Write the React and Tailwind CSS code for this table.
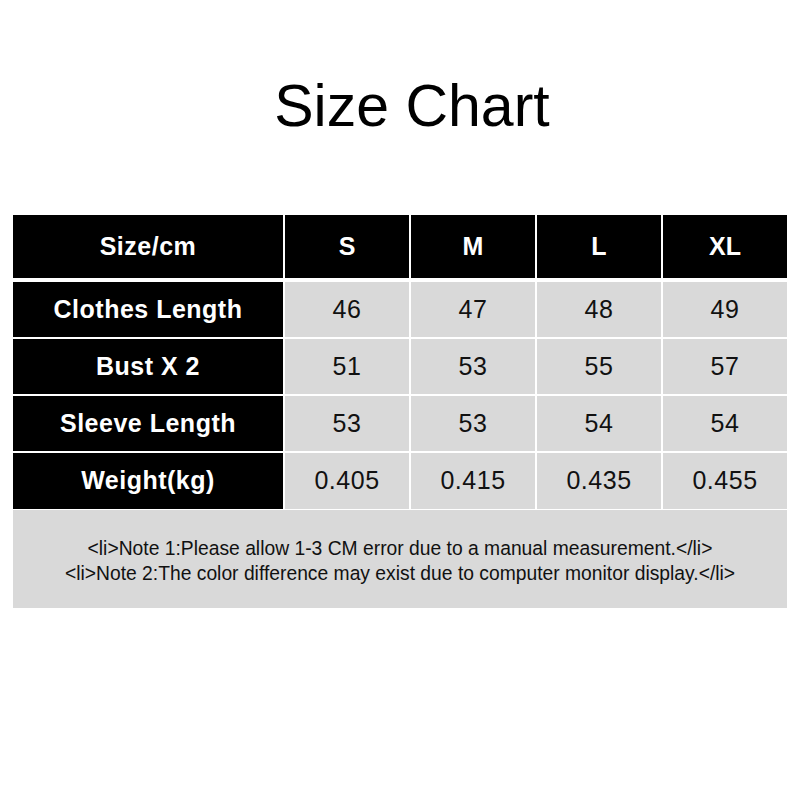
import React from "react";

const sizes = ["S", "M", "L", "XL"];

const rows = [
  { label: "Clothes Length", values: ["46", "47", "48", "49"] },
  { label: "Bust X 2", values: ["51", "53", "55", "57"] },
  { label: "Sleeve Length", values: ["53", "53", "54", "54"] },
  { label: "Weight(kg)", values: ["0.405", "0.415", "0.435", "0.455"], tall: true },
];

const font = { fontFamily: '"Liberation Sans", Arial, sans-serif' };

const App = () => {
  return (
    <div className="w-[800px] h-[800px] bg-white" style={font}>
      {/* Title */}
      <h1 className="pt-[77px] pl-[24px] text-center text-[59px] leading-none font-normal text-black">
        Size Chart
      </h1>

      {/* Table */}
      <div className="mt-[79px] ml-[13px] w-[774px] flex flex-col">
        {/* Header */}
        <div className="grid grid-cols-[270px_repeat(4,124px)] gap-x-[2px] h-[63px]">
          <div className="bg-black text-white font-bold text-[25px] tracking-[0.5px] flex items-center justify-center">
            Size/cm
          </div>
          {sizes.map((s) => (
            <div
              key={s}
              className="bg-black text-white font-bold text-[25px] flex items-center justify-center"
            >
              {s}
            </div>
          ))}
        </div>

        {/* Body */}
        <div className="mt-[4px] flex flex-col gap-y-[2px]">
          {rows.map((r) => (
            <div
              key={r.label}
              className={`grid grid-cols-[270px_repeat(4,124px)] gap-x-[2px] ${
                r.tall ? "h-[56px]" : "h-[55px]"
              }`}
            >
              <div className="bg-black text-white font-bold text-[25px] tracking-[0.5px] flex items-center justify-center">
                {r.label}
              </div>
              {r.values.map((v, i) => (
                <div
                  key={i}
                  className="bg-[#d9d9d9] text-[#111] text-[25px] tracking-[0.5px] flex items-center justify-center"
                >
                  {v}
                </div>
              ))}
            </div>
          ))}
        </div>

        {/* Notes */}
        <div className="mt-[1px] h-[98px] pt-[3px] bg-[#d9d9d9] text-[#111] text-[19.3px] leading-[25px] flex flex-col items-center justify-center">
          <div>{"<li>Note 1:Please allow 1-3 CM error due to a manual measurement.</li>"}</div>
          <div>{"<li>Note 2:The color difference may exist due to computer monitor display.</li>"}</div>
        </div>
      </div>
    </div>
  );
};

export default App;
